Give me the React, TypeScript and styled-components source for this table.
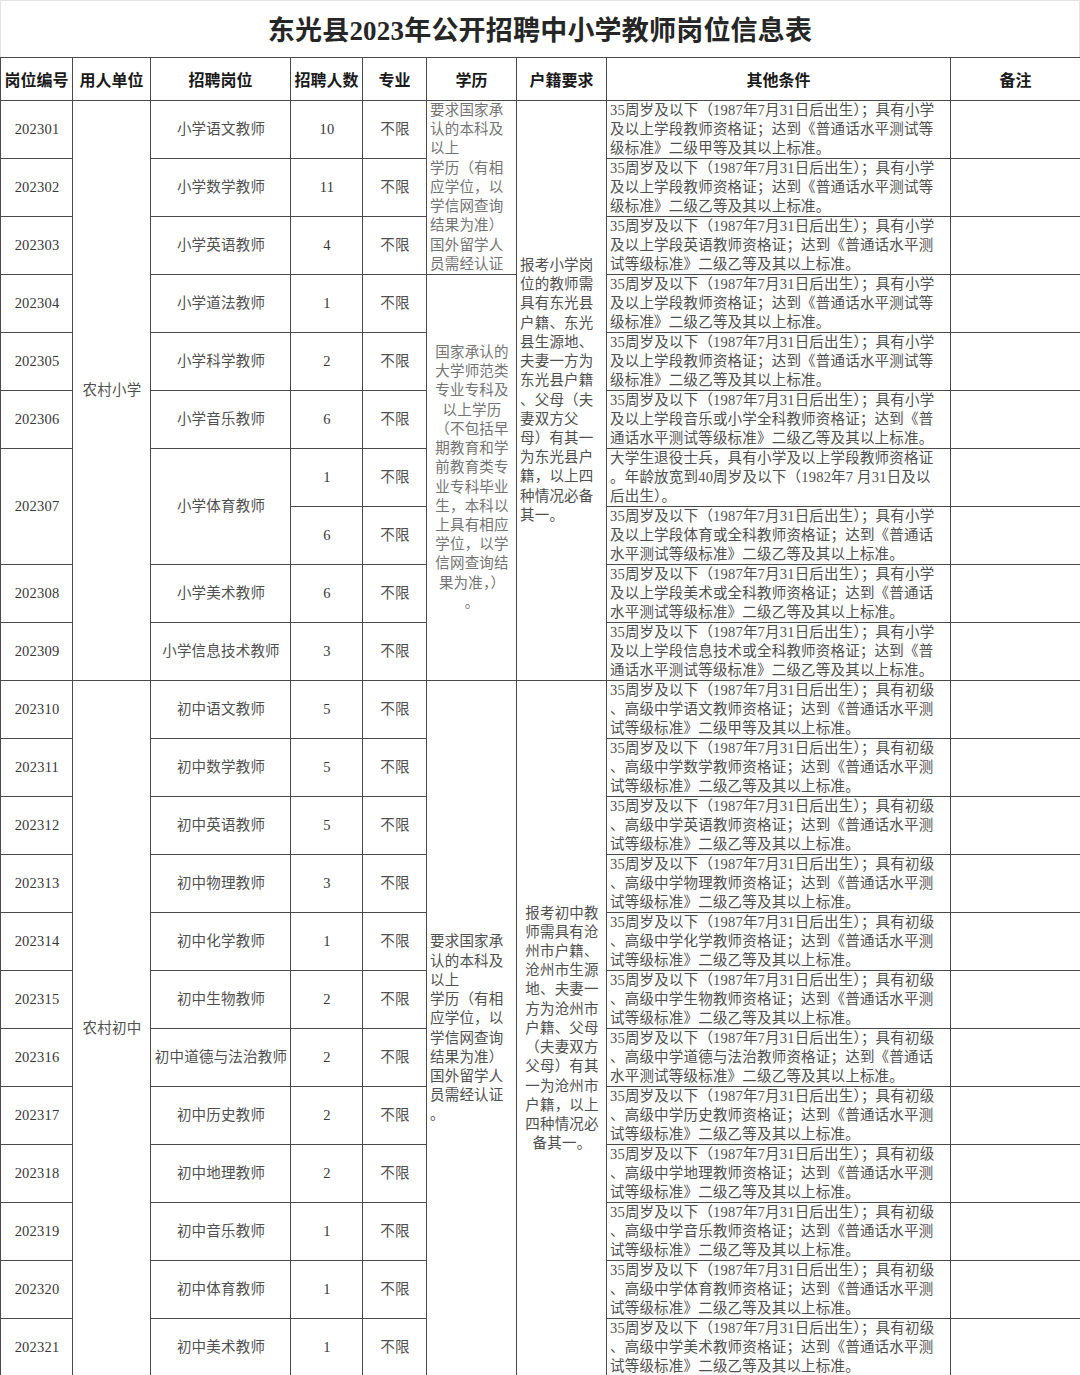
import React from "react";
import styled, { createGlobalStyle } from "styled-components";

const GlobalStyle = createGlobalStyle`
  html, body { margin: 0; padding: 0; background: #ffffff; }
  body { font-family: "Liberation Serif", "Noto Sans CJK SC", serif; }
`;

const Page = styled.div`
  width: 1080px;
  height: 1375px;
  overflow: hidden;
  background: #fff;
`;

const TitleBar = styled.div`
  height: 57px;
  box-sizing: border-box;
  border: 1px solid #e4e4e4;
  border-bottom: none;
  display: flex;
  align-items: center;
  justify-content: center;
  padding-bottom: 2px;
  font-family: "Liberation Serif", "Noto Sans CJK SC", serif;
  font-size: 27px;
  font-weight: 600;
  color: #262626;
  letter-spacing: 0.2px;
`;

const Grid = styled.div`
  display: grid;
  grid-template-columns: 72px 78px 140px 72px 64px 90px 90px 344px 130px;
  grid-template-rows: 43px repeat(22, 58px);
  border-top: 1px solid #4a4a4a;
  border-left: 1px solid #4a4a4a;
  box-sizing: border-box;
  width: 1080px;
`;

const HeadCell = styled.div`
  box-sizing: border-box;
  border-right: 1px solid #4a4a4a;
  border-bottom: 1px solid #4a4a4a;
  display: flex;
  align-items: center;
  justify-content: center;
  font-family: "Noto Sans CJK SC", sans-serif;
  font-size: 16px;
  font-weight: 600;
  color: #1a1a1a;
  white-space: nowrap;
`;

type Tone = "dark" | "mid" | "light";
const toneColor: Record<Tone, string> = {
  dark: "#383838",
  mid: "#505050",
  light: "#747474",
};

const Cell = styled.div<{ $span?: number; $align?: "left" | "center"; $tone?: Tone }>`
  grid-row: span ${(p) => p.$span ?? 1};
  box-sizing: border-box;
  border-right: 1px solid #4a4a4a;
  border-bottom: 1px solid #4a4a4a;
  display: flex;
  flex-direction: column;
  justify-content: center;
  align-items: ${(p) => (p.$align === "left" ? "flex-start" : "center")};
  text-align: ${(p) => (p.$align === "left" ? "left" : "center")};
  padding: 0 2px 0 3px;
  font-family: "Liberation Serif", "Noto Sans CJK SC", serif;
  font-size: 14.5px;
  line-height: 19.2px;
  letter-spacing: 0.2px;
  color: ${(p) => toneColor[p.$tone ?? "mid"]};
  overflow: hidden;
`;

const Line = styled.span`
  display: block;
  white-space: nowrap;
`;

const headers = ["岗位编号", "用人单位", "招聘岗位", "招聘人数", "专业", "学历", "户籍要求", "其他条件", "备注"];

const primaryCond = (grade: string): string[] => [
  "35周岁及以下（1987年7月31日后出生）；具有小学",
  "及以上学段教师资格证；达到《普通话水平测试等",
  `级标准》二级${grade}等及其以上标准。`,
];

const juniorCond = (subject: string, grade: string): string[] => [
  "35周岁及以下（1987年7月31日后出生）；具有初级",
  `、高级中学${subject}教师资格证；达到《普通话水平测`,
  `试等级标准》二级${grade}等及其以上标准。`,
];

type Row = {
  code?: string;
  codeSpan?: number;
  post?: string;
  postSpan?: number;
  count: string;
  cond: string[];
};

const primaryRows: Row[] = [
  { code: "202301", post: "小学语文教师", count: "10", cond: primaryCond("甲") },
  { code: "202302", post: "小学数学教师", count: "11", cond: primaryCond("乙") },
  {
    code: "202303",
    post: "小学英语教师",
    count: "4",
    cond: [
      "35周岁及以下（1987年7月31日后出生）；具有小学",
      "及以上学段英语教师资格证；达到《普通话水平测",
      "试等级标准》二级乙等及其以上标准。",
    ],
  },
  { code: "202304", post: "小学道法教师", count: "1", cond: primaryCond("乙") },
  { code: "202305", post: "小学科学教师", count: "2", cond: primaryCond("乙") },
  {
    code: "202306",
    post: "小学音乐教师",
    count: "6",
    cond: [
      "35周岁及以下（1987年7月31日后出生）；具有小学",
      "及以上学段音乐或小学全科教师资格证；达到《普",
      "通话水平测试等级标准》二级乙等及其以上标准。",
    ],
  },
  {
    code: "202307",
    codeSpan: 2,
    post: "小学体育教师",
    postSpan: 2,
    count: "1",
    cond: [
      "大学生退役士兵，具有小学及以上学段教师资格证",
      "。年龄放宽到40周岁及以下（1982年7 月31日及以",
      "后出生）。",
    ],
  },
  {
    count: "6",
    cond: [
      "35周岁及以下（1987年7月31日后出生）；具有小学",
      "及以上学段体育或全科教师资格证；达到《普通话",
      "水平测试等级标准》二级乙等及其以上标准。",
    ],
  },
  {
    code: "202308",
    post: "小学美术教师",
    count: "6",
    cond: [
      "35周岁及以下（1987年7月31日后出生）；具有小学",
      "及以上学段美术或全科教师资格证；达到《普通话",
      "水平测试等级标准》二级乙等及其以上标准。",
    ],
  },
  {
    code: "202309",
    post: "小学信息技术教师",
    count: "3",
    cond: [
      "35周岁及以下（1987年7月31日后出生）；具有小学",
      "及以上学段信息技术或全科教师资格证；达到《普",
      "通话水平测试等级标准》二级乙等及其以上标准。",
    ],
  },
];

const juniorRows: Row[] = [
  { code: "202310", post: "初中语文教师", count: "5", cond: juniorCond("语文", "甲") },
  { code: "202311", post: "初中数学教师", count: "5", cond: juniorCond("数学", "乙") },
  { code: "202312", post: "初中英语教师", count: "5", cond: juniorCond("英语", "乙") },
  { code: "202313", post: "初中物理教师", count: "3", cond: juniorCond("物理", "乙") },
  { code: "202314", post: "初中化学教师", count: "1", cond: juniorCond("化学", "乙") },
  { code: "202315", post: "初中生物教师", count: "2", cond: juniorCond("生物", "乙") },
  {
    code: "202316",
    post: "初中道德与法治教师",
    count: "2",
    cond: [
      "35周岁及以下（1987年7月31日后出生）；具有初级",
      "、高级中学道德与法治教师资格证；达到《普通话",
      "水平测试等级标准》二级乙等及其以上标准。",
    ],
  },
  { code: "202317", post: "初中历史教师", count: "2", cond: juniorCond("历史", "乙") },
  { code: "202318", post: "初中地理教师", count: "2", cond: juniorCond("地理", "乙") },
  { code: "202319", post: "初中音乐教师", count: "1", cond: juniorCond("音乐", "乙") },
  { code: "202320", post: "初中体育教师", count: "1", cond: juniorCond("体育", "乙") },
  { code: "202321", post: "初中美术教师", count: "1", cond: juniorCond("美术", "乙") },
];

const eduA = ["要求国家承", "认的本科及", "以上", "学历（有相", "应学位，以", "学信网查询", "结果为准）", "国外留学人", "员需经认证"];
const eduB = [
  "国家承认的",
  "大学师范类",
  "专业专科及",
  "以上学历",
  "（不包括早",
  "期教育和学",
  "前教育类专",
  "业专科毕业",
  "生，本科以",
  "上具有相应",
  "学位，以学",
  "信网查询结",
  "果为准，）",
  "。",
];
const eduC = [...eduA, "。"];

const hujiA = [
  "报考小学岗",
  "位的教师需",
  "具有东光县",
  "户籍、东光",
  "县生源地、",
  "夫妻一方为",
  "东光县户籍",
  "、父母（夫",
  "妻双方父",
  "母）有其一",
  "为东光县户",
  "籍，以上四",
  "种情况必备",
  "其一。",
];
const hujiB = [
  "报考初中教",
  "师需具有沧",
  "州市户籍、",
  "沧州市生源",
  "地、夫妻一",
  "方为沧州市",
  "户籍、父母",
  "（夫妻双方",
  "父母）有其",
  "一为沧州市",
  "户籍，以上",
  "四种情况必",
  "备其一。",
];

const Lines: React.FC<{ lines: string[] }> = ({ lines }) => (
  <>
    {lines.map((l, i) => (
      <Line key={i}>{l}</Line>
    ))}
  </>
);

function renderRow(row: Row, key: string, extrasBeforePost: React.ReactNode, extrasAfterMajor: React.ReactNode) {
  return (
    <React.Fragment key={key}>
      {row.code && (
        <Cell $span={row.codeSpan} $tone="dark">
          {row.code}
        </Cell>
      )}
      {extrasBeforePost}
      {row.post && (
        <Cell $span={row.postSpan} $tone="mid">
          <Line>{row.post}</Line>
        </Cell>
      )}
      <Cell $tone="dark">{row.count}</Cell>
      <Cell $tone="mid">不限</Cell>
      {extrasAfterMajor}
      <Cell $align="left" $tone="mid">
        <Lines lines={row.cond} />
      </Cell>
      <Cell />
    </React.Fragment>
  );
}

export default function App() {
  const body: React.ReactNode[] = [];

  primaryRows.forEach((row, i) => {
    let before: React.ReactNode = null;
    let after: React.ReactNode = null;
    if (i === 0) {
      before = (
        <Cell $span={10} $tone="mid">
          农村小学
        </Cell>
      );
      after = (
        <>
          <Cell $span={3} $align="left" $tone="light">
            <Lines lines={eduA} />
          </Cell>
          <Cell $span={10} $align="left" $tone="mid">
            <Lines lines={hujiA} />
          </Cell>
        </>
      );
    } else if (i === 3) {
      after = (
        <Cell $span={7} $tone="light">
          <Lines lines={eduB} />
        </Cell>
      );
    }
    body.push(renderRow(row, `p${i}`, before, after));
  });

  juniorRows.forEach((row, i) => {
    let before: React.ReactNode = null;
    let after: React.ReactNode = null;
    if (i === 0) {
      before = (
        <Cell $span={12} $tone="mid">
          农村初中
        </Cell>
      );
      after = (
        <>
          <Cell $span={12} $align="left" $tone="mid">
            <Lines lines={eduC} />
          </Cell>
          <Cell $span={12} $tone="mid">
            <Lines lines={hujiB} />
          </Cell>
        </>
      );
    }
    body.push(renderRow(row, `j${i}`, before, after));
  });

  return (
    <Page>
      <GlobalStyle />
      <TitleBar>东光县2023年公开招聘中小学教师岗位信息表</TitleBar>
      <Grid>
        {headers.map((h) => (
          <HeadCell key={h}>{h}</HeadCell>
        ))}
        {body}
      </Grid>
    </Page>
  );
}
